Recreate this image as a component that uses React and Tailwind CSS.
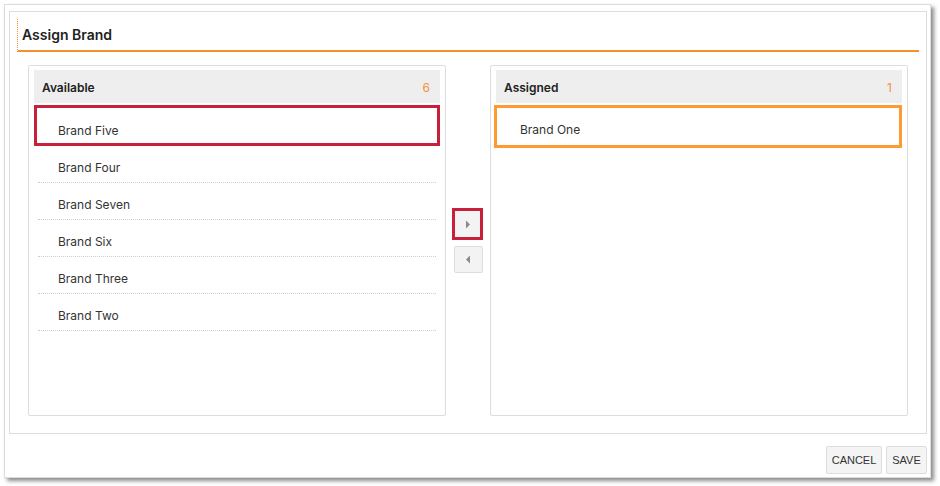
import React from "react";

const available = ["Brand Four", "Brand Seven", "Brand Six", "Brand Three", "Brand Two"];

function ListHeader({ title, count }) {
  return (
    <div className="h-[33px] bg-[#eeeeee] flex items-center justify-between pl-[8px] pr-[10px] pt-[3px]">
      <span className="text-[12px] font-semibold text-[#222]">{title}</span>
      <span className="text-[12px] text-[#f0913f]">{count}</span>
    </div>
  );
}

export default function App() {
  return (
    <div className="w-[940px] h-[486px] bg-white pt-[4px] pl-[4px] font-['Inter',sans-serif]">
      {/* outer card */}
      <div className="w-[927px] h-[474px] bg-white border border-[#dcdcdc] shadow-[3px_3px_4px_rgba(0,0,0,0.45)] flex flex-col">
        {/* panel */}
        <div className="ml-[4px] mt-[6px] w-[918px] h-[423px] border border-[#dddddd] pl-[7px] pt-[7px]">
          <div className="w-[902px] h-[33px] border-l border-b-2 border-[#f0912a] [border-left-style:dotted] flex items-center pl-[4px]">
            <h1 className="text-[14px] font-semibold text-[#222]">Assign Brand</h1>
          </div>

          <div className="ml-[11px] mt-[13px] flex">
            {/* available */}
            <div className="w-[418px] h-[351px] border border-[#dddddd] rounded-[2px] px-[5px] pt-[4px]">
              <ListHeader title="Available" count="6" />
              <div className="mt-[2px] h-[41px] border-[3px] border-[#c8203a] flex items-center pl-[21px] pt-[10px] text-[12px] text-[#333]">
                Brand Five
              </div>
              {available.map((b) => (
                <div
                  key={b}
                  className="mx-[4px] h-[37px] border-b border-dotted border-[#cfcfcf] flex items-center pl-[20px] pt-[7px] text-[12px] text-[#333]"
                >
                  {b}
                </div>
              ))}
            </div>

            {/* move buttons */}
            <div className="w-[44px] flex flex-col items-center justify-center gap-[6px]">
              <button className="ml-[-1px] w-[31px] h-[32px] border-[3px] border-[#c8203a] bg-[#f3f3f3] flex items-center justify-center">
                <svg width="6" height="9" viewBox="0 0 6 9">
                  <path d="M1 0.5 L5 4.5 L1 8.5 Z" fill="#8a8a8a" />
                </svg>
              </button>
              <button className="w-[29px] h-[27px] border border-[#dddddd] rounded-[2px] bg-[#f3f3f3] flex items-center justify-center">
                <svg width="6" height="9" viewBox="0 0 6 9">
                  <path d="M5 0.5 L1 4.5 L5 8.5 Z" fill="#8a8a8a" />
                </svg>
              </button>
            </div>

            {/* assigned */}
            <div className="w-[418px] h-[351px] border border-[#dddddd] rounded-[2px] px-[5px] pt-[4px]">
              <ListHeader title="Assigned" count="1" />
              <div className="mt-[2px] -ml-[2px] h-[43px] border-[3px] border-[#ff9a33] flex items-center pl-[23px] pt-[6px] text-[12px] text-[#333]">
                Brand One
              </div>
            </div>
          </div>
        </div>

        {/* footer */}
        <div className="mt-[12px] mr-[3px] flex justify-end gap-[4px] font-['Liberation_Sans',Arial,sans-serif]">
          <button className="w-[56px] h-[28px] border border-[#dddddd] rounded-[2px] bg-[#f4f4f4] text-[11px] text-[#333]">
            CANCEL
          </button>
          <button className="w-[41px] h-[28px] border border-[#dddddd] rounded-[2px] bg-[#f4f4f4] text-[11px] text-[#333]">
            SAVE
          </button>
        </div>
      </div>
    </div>
  );
}
